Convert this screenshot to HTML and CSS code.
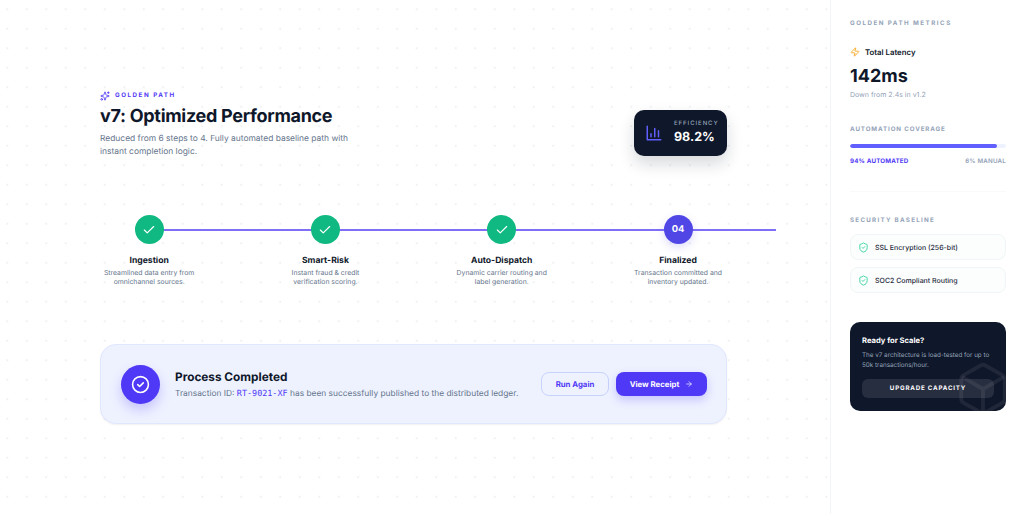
FILE: index.html
```html
<!DOCTYPE html>
<html lang="en">
<head>
<meta charset="utf-8">
<title>Golden Path</title>
<link rel="stylesheet" href="styles.css">
</head>
<body>
<div class="app">
  <main class="main">
    <header class="hero">
      <div class="hero-text">
        <div class="eyebrow">
          <svg class="eyebrow-icon" viewBox="0 0 24 24" fill="none" stroke="currentColor" stroke-width="2" stroke-linecap="round" stroke-linejoin="round"><path d="M11.017 2.814a1 1 0 0 1 1.966 0l1.051 5.558a2 2 0 0 0 1.594 1.594l5.558 1.051a1 1 0 0 1 0 1.966l-5.558 1.051a2 2 0 0 0-1.594 1.594l-1.051 5.558a1 1 0 0 1-1.966 0l-1.051-5.558a2 2 0 0 0-1.594-1.594l-5.558-1.051a1 1 0 0 1 0-1.966l5.558-1.051a2 2 0 0 0 1.594-1.594z"/><path d="M20 2v4M22 4h-4"/><circle cx="4" cy="20" r="2"/></svg>
          <span>GOLDEN PATH</span>
        </div>
        <h1>v7: Optimized Performance</h1>
        <p>Reduced from 6 steps to 4. Fully automated baseline path with instant completion logic.</p>
      </div>
      <div class="eff">
        <svg class="eff-icon" viewBox="0 0 24 24" fill="none" stroke="currentColor" stroke-width="2" stroke-linecap="round" stroke-linejoin="round"><path d="M3 3v18h18"/><path d="M8 17v-4M13 17V6M18 17V9"/></svg>
        <div>
          <div class="eff-label">EFFICIENCY</div>
          <div class="eff-value">98.2%</div>
        </div>
      </div>
    </header>

    <section class="steps">
      <div class="step">
        <div class="dot done"><svg viewBox="0 0 24 24" fill="none" stroke="currentColor" stroke-width="2" stroke-linecap="round" stroke-linejoin="round"><path d="M20 6 9 17l-5-5"/></svg></div>
        <h3>Ingestion</h3>
        <p>Streamlined data entry from<br>omnichannel sources.</p>
      </div>
      <div class="step">
        <div class="dot done"><svg viewBox="0 0 24 24" fill="none" stroke="currentColor" stroke-width="2" stroke-linecap="round" stroke-linejoin="round"><path d="M20 6 9 17l-5-5"/></svg></div>
        <h3>Smart-Risk</h3>
        <p>Instant fraud &amp; credit<br>verification scoring.</p>
      </div>
      <div class="step">
        <div class="dot done"><svg viewBox="0 0 24 24" fill="none" stroke="currentColor" stroke-width="2" stroke-linecap="round" stroke-linejoin="round"><path d="M20 6 9 17l-5-5"/></svg></div>
        <h3>Auto-Dispatch</h3>
        <p>Dynamic carrier routing and<br>label generation.</p>
      </div>
      <div class="step">
        <div class="dot current">04</div>
        <h3>Finalized</h3>
        <p>Transaction committed and<br>inventory updated.</p>
      </div>
    </section>

    <section class="done-card">
      <div class="done-badge">
        <svg viewBox="0 0 24 24" fill="none" stroke="currentColor" stroke-width="2" stroke-linecap="round" stroke-linejoin="round"><circle cx="12" cy="12" r="10"/><path d="m8.5 12.2 2.4 2.3 4.6-4.6"/></svg>
      </div>
      <div class="done-text">
        <h2>Process Completed</h2>
        <p>Transaction ID: <code>RT-9021-XF</code> has been successfully published to the distributed ledger.</p>
      </div>
      <div class="done-actions">
        <button class="btn ghost">Run Again</button>
        <button class="btn solid">View Receipt
          <svg viewBox="0 0 24 24" fill="none" stroke="currentColor" stroke-width="2" stroke-linecap="round" stroke-linejoin="round"><path d="M5 12h14M12 5l7 7-7 7"/></svg>
        </button>
      </div>
    </section>
  </main>

  <aside class="side">
    <h4 class="side-title first">GOLDEN PATH METRICS</h4>
    <div class="latency-label">
      <svg viewBox="0 0 24 24" fill="none" stroke="currentColor" stroke-width="2" stroke-linecap="round" stroke-linejoin="round"><path d="M4 14a1 1 0 0 1-.78-1.63l9.9-10.2a.5.5 0 0 1 .86.46l-1.92 6.02A1 1 0 0 0 13 10h7a1 1 0 0 1 .78 1.63l-9.9 10.2a.5.5 0 0 1-.86-.46l1.92-6.02A1 1 0 0 0 11 14z"/></svg>
      <span>Total Latency</span>
    </div>
    <div class="latency-value">142ms</div>
    <div class="latency-note">Down from 2.4s in v1.2</div>

    <h4 class="side-title coverage-title">AUTOMATION COVERAGE</h4>
    <div class="bar"><div class="bar-fill"></div></div>
    <div class="bar-legend"><span class="auto">94% AUTOMATED</span><span>6% MANUAL</span></div>

    <hr class="rule">

    <h4 class="side-title">SECURITY BASELINE</h4>
    <div class="sec-item">
      <svg viewBox="0 0 24 24" fill="none" stroke="currentColor" stroke-width="2" stroke-linecap="round" stroke-linejoin="round"><path d="M20 13c0 5-3.5 7.5-7.66 8.95a1 1 0 0 1-.67-.01C7.5 20.5 4 18 4 13V6a1 1 0 0 1 1-1c2 0 4.5-1.2 6.24-2.72a1.17 1.17 0 0 1 1.52 0C14.51 3.81 17 5 19 5a1 1 0 0 1 1 1z"/><path d="m9 12 2 2 4-4"/></svg>
      <span>SSL Encryption (256-bit)</span>
    </div>
    <div class="sec-item">
      <svg viewBox="0 0 24 24" fill="none" stroke="currentColor" stroke-width="2" stroke-linecap="round" stroke-linejoin="round"><path d="M20 13c0 5-3.5 7.5-7.66 8.95a1 1 0 0 1-.67-.01C7.5 20.5 4 18 4 13V6a1 1 0 0 1 1-1c2 0 4.5-1.2 6.24-2.72a1.17 1.17 0 0 1 1.52 0C14.51 3.81 17 5 19 5a1 1 0 0 1 1 1z"/><path d="m9 12 2 2 4-4"/></svg>
      <span>SOC2 Compliant Routing</span>
    </div>

    <div class="promo">
      <h5>Ready for Scale?</h5>
      <p>The v7 architecture is load-tested for up to 50k transactions/hour.</p>
      <button class="promo-btn">UPGRADE CAPACITY</button>
      <svg class="promo-art" viewBox="0 0 24 24" fill="none" stroke="currentColor" stroke-width="1.6" stroke-linejoin="round"><path d="M21 8a2 2 0 0 0-1-1.73l-7-4a2 2 0 0 0-2 0l-7 4A2 2 0 0 0 3 8v8a2 2 0 0 0 1 1.73l7 4a2 2 0 0 0 2 0l7-4A2 2 0 0 0 21 16Z"/><path d="m3.3 7 8.7 5 8.7-5M12 22V12"/></svg>
    </div>
  </aside>
</div>
</body>
</html>
```
FILE: styles.css
```css
* { box-sizing: border-box; }
html, body { margin: 0; height: 100%; }
body {
  font-family: Inter, "Liberation Sans", sans-serif;
  color: #0f172a;
  background: #fff;
  overflow: hidden;
  text-rendering: geometricPrecision;
}
.app { display: flex; height: 514px; overflow: hidden; }

.main {
  width: 830px;
  flex: none;
  padding: 90px 0 0 100px;
  background-color: #fff;
  background-image: radial-gradient(circle, #eef1f5 0.7px, transparent 1px);
  background-size: 19.5px 19.5px;
  background-position: -2.5px -0.5px;
}

.hero { width: 627px; display: flex; justify-content: space-between; align-items: center; }
.hero-text { width: 260px; }
.eyebrow { display: flex; align-items: center; gap: 5px; color: #4f39f6; font-size: 6.2px; font-weight: 700; letter-spacing: 1.55px; height: 11px; }
.eyebrow-icon { width: 10px; height: 10px; flex: none; }
.hero h1 { margin: 3px 0 0; font-size: 18px; line-height: 26px; font-weight: 700; letter-spacing: -0.3px; white-space: nowrap; color: #0f172a; }
.hero p { margin: 3px 0 0; font-size: 8.43px; line-height: 13px; color: #64748b; }

.eff { width: 93px; height: 46px; margin-top: 16px; background: #0f172a; border-radius: 10px; display: flex; align-items: center; gap: 11px; padding-left: 11px; box-shadow: 0 8px 16px rgba(15, 23, 42, .16); color: #fff; }
.eff-icon { width: 18px; height: 18px; color: #615fff; flex: none; }
.eff-label { font-size: 6px; letter-spacing: .95px; color: #94a3b8; font-weight: 500; line-height: 9px; }
.eff-value { font-size: 12.5px; font-weight: 700; line-height: 16px; margin-top: 2px; }

.steps { position: relative; display: flex; margin: 56px 0 0 -39px; width: 715px; }
.steps::before { content: ""; position: absolute; left: 88px; right: 0; top: 14px; height: 2px; background: #7f6ff7; }
.step { position: relative; width: 176.3px; flex: none; text-align: center; }
.dot { width: 29px; height: 29px; border-radius: 50%; margin: 0 auto; display: flex; align-items: center; justify-content: center; color: #fff; font-size: 9.4px; font-weight: 700; }
.dot svg { width: 14px; height: 14px; }
.dot.done { background: #10b981; }
.dot.current { background: #4f46e5; box-shadow: 0 3px 10px rgba(79, 70, 229, .2); }
.step h3 { margin: 11px 0 0; font-size: 8.6px; line-height: 12px; font-weight: 700; color: #0f172a; }
.step p { margin: 2px 0 0; font-size: 6.85px; line-height: 8.7px; color: #64748b; }

.done-card { width: 627px; height: 80px; margin-top: 58px; display: flex; align-items: center; padding: 0 19px 0 20px; background: #eef2ff; border: 1px solid #e0e7ff; border-radius: 16px; box-shadow: 0 1px 2px rgba(15, 23, 42, .06); }
.done-badge { width: 39px; height: 39px; border-radius: 50%; background: #4f39f6; color: #fff; display: flex; align-items: center; justify-content: center; flex: none; box-shadow: 0 6px 12px rgba(79, 57, 246, .25); }
.done-badge svg { width: 19px; height: 19px; }
.done-text { margin-left: 15px; flex: 1; padding-top: 2px; }
.done-text h2 { margin: 0; font-size: 11.8px; line-height: 16px; font-weight: 700; color: #0f172a; }
.done-text p { margin: 2px 0 0; font-size: 8.4px; line-height: 13px; color: #64748b; white-space: nowrap; }
.done-text code { font-family: "DejaVu Sans Mono", monospace; font-size: 8.45px; color: #4f39f6; }
.done-actions { display: flex; gap: 7px; flex: none; }
.btn { height: 24px; border-radius: 8px; font: 700 7.8px Inter, sans-serif; text-rendering: geometricPrecision; display: flex; align-items: center; justify-content: center; }
.ghost { width: 68px; background: transparent; border: 1px solid #c7d2fe; color: #4f39f6; }
.solid { width: 91px; gap: 6px; background: #4f39f6; border: 0; color: #fff; box-shadow: 0 4px 10px rgba(79, 57, 246, .25); }
.solid svg { width: 8px; height: 8px; }

.side { width: 194px; flex: none; padding: 19px 18px 0 19px; background: #fff; border-left: 1px solid #f1f5f9; }
.side-title { margin: 0; font-size: 6.2px; line-height: 9px; font-weight: 700; letter-spacing: 1.3px; color: #94a3b8; }
.side-title.first { letter-spacing: 1.5px; }
.latency-label { display: flex; align-items: center; gap: 5px; margin-top: 17px; height: 13px; font-size: 7.8px; font-weight: 600; color: #0f172a; }
.latency-label svg { width: 10px; height: 10px; color: #f59e0b; }
.latency-value { margin-top: 8px; font-size: 18px; line-height: 22px; font-weight: 700; color: #0f172a; }
.latency-note { margin-top: 2px; font-size: 7px; line-height: 10px; color: #94a3b8; }
.coverage-title { margin-top: 25px; letter-spacing: .9px; }
.bar { margin-top: 10px; height: 4px; border-radius: 2px; background: #eef2ff; overflow: hidden; }
.bar-fill { width: 94%; height: 100%; background: #615fff; border-radius: 2px; }
.bar-legend { display: flex; justify-content: space-between; margin-top: 9px; font-size: 6.2px; line-height: 9px; font-weight: 600; color: #94a3b8; letter-spacing: .2px; }
.auto { color: #4f39f6; font-weight: 700; }
.rule { border: 0; border-top: 1px solid #f8fafc; margin: 25px 0 24px; }
.sec-item { height: 26px; margin-top: 7px; display: flex; align-items: center; gap: 6px; padding-left: 7px; background: #fcfefe; border: 1px solid #f1f5f9; border-radius: 8px; font-size: 7px; font-weight: 500; color: #1e293b; }
.side-title + .sec-item { margin-top: 9px; }
.sec-item svg { width: 11px; height: 11px; color: #34d399; flex: none; }
.promo { position: relative; overflow: hidden; margin-top: 29px; height: 89px; padding: 13px 12px 0; background: #0f172a; border-radius: 10px; color: #fff; }
.promo h5 { margin: 0; font-size: 7.6px; line-height: 11px; font-weight: 700; }
.promo p { margin: 4px 0 0; font-size: 6.3px; line-height: 10px; color: #94a3b8; }
.promo-btn { position: relative; display: block; width: 132px; height: 19px; margin-top: 9px; border: 0; border-radius: 6px; background: rgba(255, 255, 255, .1); color: #fff; font: 700 6.2px Inter, sans-serif; letter-spacing: .8px; text-rendering: geometricPrecision; }
.promo-art { position: absolute; right: -6px; bottom: -7px; width: 58px; height: 58px; color: rgba(255, 255, 255, .07); }
```
